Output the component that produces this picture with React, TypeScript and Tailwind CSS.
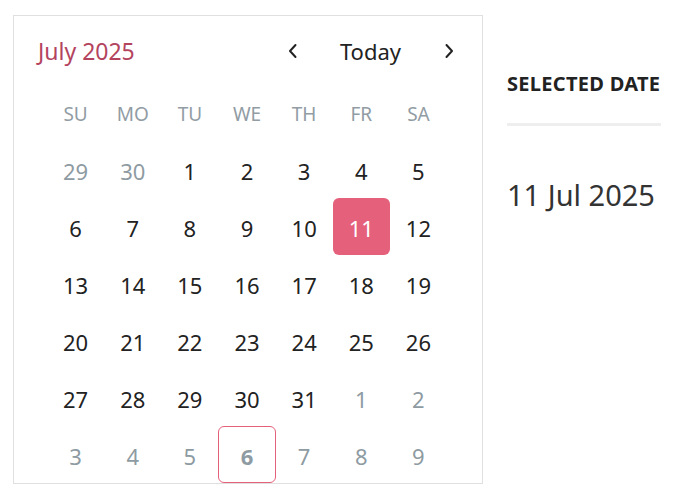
import React from 'react';

type Day = { n: number; muted?: boolean; selected?: boolean; today?: boolean };

const weekdays = ['SU', 'MO', 'TU', 'WE', 'TH', 'FR', 'SA'];

const buildDays = (): Day[] => {
    const days: Day[] = [{ n: 29, muted: true }, { n: 30, muted: true }];
    for (let i = 1; i <= 31; i++) days.push({ n: i, selected: i === 11 });
    for (let i = 1; i <= 9; i++) days.push({ n: i, muted: true, today: i === 6 });
    return days;
};

const Chevron = ({ dir }: { dir: 'left' | 'right' }) => (
    <svg width="10" height="16" viewBox="0 0 10 16" fill="none" stroke="#222" strokeWidth="2" strokeLinecap="round" strokeLinejoin="round">
        {dir === 'left' ? <path d="M7.5 2 L2 8 L7.5 14" /> : <path d="M2.5 2 L8 8 L2.5 14" />}
    </svg>
);

export default function App() {
    const days = buildDays();
    return (
        <div className="flex items-start pt-[15px] pl-[13px] bg-white min-h-screen" style={{ fontFamily: '"Noto Sans", "Open Sans", sans-serif' }}>
            <div className="w-[470px] h-[469px] border border-[#e0e0e0] flex flex-col overflow-hidden">
                <div className="h-[68px] shrink-0 flex items-center justify-between pl-[24px] pr-[28px] pt-[3px]">
                    <span className="text-[23px] text-[#b4445e]">July 2025</span>
                    <div className="flex items-center">
                        <button className="w-[10px] flex items-center mt-[-2px] ml-[-2px]"><Chevron dir="left" /></button>
                        <span className="text-[22px] text-[#222] ml-[42px] mr-[43px]">Today</span>
                        <button className="w-[10px] flex items-center mt-[-2px]"><Chevron dir="right" /></button>
                    </div>
                </div>
                <div className="ml-[33px] mr-[35px] grid grid-cols-7">
                    {weekdays.map(w => (
                        <div key={w} className="h-[57px] flex items-center justify-center pt-[4px] text-[19px] text-[#919ca4]">{w}</div>
                    ))}
                    {days.map((d, i) => (
                        <div
                            key={i}
                            className={
                                'h-[57px] flex items-center justify-center pt-[3px] text-[22px] rounded-[6px] ' +
                                (d.selected
                                    ? 'bg-[#e5607b] text-white'
                                    : d.today
                                        ? 'border border-[#e5607b] text-[#8e9ba2] font-bold'
                                        : d.muted
                                            ? 'text-[#8e9ba2]'
                                            : 'text-[#222]')
                            }
                        >
                            {d.n}
                        </div>
                    ))}
                </div>
            </div>
            <div className="ml-[24px] w-[154px] pt-[56px]">
                <div className="text-[20px] font-bold text-[#222] leading-[26px] tracking-[0.3px] whitespace-nowrap">SELECTED DATE</div>
                <div className="h-[3px] bg-[#eeeeee] mt-[26px]"></div>
                <div className="text-[29px] text-[#333] mt-[49px] leading-[40px] whitespace-nowrap">11 Jul 2025</div>
            </div>
        </div>
    );
}
